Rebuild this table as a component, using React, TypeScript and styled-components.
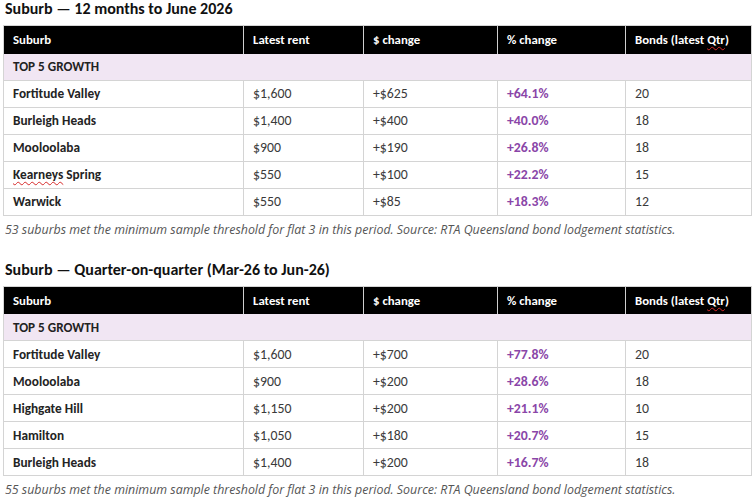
import React from "react";
import styled, { createGlobalStyle } from "styled-components";

const Global = createGlobalStyle`
  html, body { margin: 0; padding: 0; background: #fff; }
  body { font-family: Carlito, Calibri, Lato, "Liberation Sans", sans-serif; color: #333; }
`;

const Page = styled.div`
  padding: 0 5px 0 3px;
  width: 748px;
`;

const Section = styled.section`
  & + & { margin-top: 21px; }
`;

const Title = styled.h2`
  margin: 0 0 0 2px;
  font-size: 16px;
  line-height: 18px;
  font-weight: 700;
  color: #111;
`;

const Table = styled.table`
  margin-top: 7px;
  width: 748px;
  border-collapse: collapse;
  table-layout: fixed;
  font-size: 14px;
  border: 1px solid #d4d4d4;
`;

const HeadCell = styled.th<{ $w: number }>`
  width: ${(p) => p.$w}px;
  height: 28px;
  padding: 0 9px;
  box-sizing: border-box;
  background: #000;
  color: #fff;
  text-align: left;
  font-weight: 700;
  font-size: 12.8px;
  border-left: 1px solid #cfcfcf;
  &:first-child { border-left: none; }
`;

const GroupCell = styled.td`
  height: 26px;
  padding: 0 9px;
  background: #f1e6f3;
  font-weight: 700;
  font-size: 13.2px;
  color: #222;
  border-bottom: 1px solid #d4d4d4;
`;

const Cell = styled.td<{ $kind?: "name" | "pct" | "plain" }>`
  height: 27px;
  padding: 0 9px;
  box-sizing: border-box;
  border: 1px solid #d4d4d4;
  font-size: ${(p) => (p.$kind === "name" ? "13.3px" : "13.8px")};
  font-weight: ${(p) => (p.$kind === "name" || p.$kind === "pct" ? 700 : 400)};
  color: ${(p) => (p.$kind === "pct" ? "#8a46a8" : p.$kind === "name" ? "#242424" : "#3a3a3a")};
`;

const Squiggle = styled.span`
  text-decoration: underline wavy #d62a2a;
  text-decoration-thickness: 1px;
  text-underline-offset: 2px;
`;

const Caption = styled.p`
  margin: 4px 0 0 2px;
  font-family: "Open Sans", sans-serif;
  font-style: italic;
  font-size: 12.4px;
  line-height: 20px;
  color: #555;
`;

type Row = [string, string, string, string, string];

const widths = [240, 120, 134, 128, 126];

const Bonds = () => (
  <>
    Bonds (latest <Squiggle>Qtr</Squiggle>)
  </>
);

const renderName = (n: string) =>
  n === "Kearneys Spring" ? (
    <>
      <Squiggle>Kearneys</Squiggle> Spring
    </>
  ) : (
    n
  );

const GrowthTable = ({ title, rows, caption }: { title: string; rows: Row[]; caption: string }) => (
  <Section>
    <Title>{title}</Title>
    <Table>
      <thead>
        <tr>
          <HeadCell $w={widths[0]}>Suburb</HeadCell>
          <HeadCell $w={widths[1]}>Latest rent</HeadCell>
          <HeadCell $w={widths[2]}>$ change</HeadCell>
          <HeadCell $w={widths[3]}>% change</HeadCell>
          <HeadCell $w={widths[4]}>
            <Bonds />
          </HeadCell>
        </tr>
      </thead>
      <tbody>
        <tr>
          <GroupCell colSpan={5}>TOP 5 GROWTH</GroupCell>
        </tr>
        {rows.map((r) => (
          <tr key={r[0]}>
            <Cell $kind="name">{renderName(r[0])}</Cell>
            <Cell>{r[1]}</Cell>
            <Cell>{r[2]}</Cell>
            <Cell $kind="pct">{r[3]}</Cell>
            <Cell>{r[4]}</Cell>
          </tr>
        ))}
      </tbody>
    </Table>
    <Caption>{caption}</Caption>
  </Section>
);

const yearRows: Row[] = [
  ["Fortitude Valley", "$1,600", "+$625", "+64.1%", "20"],
  ["Burleigh Heads", "$1,400", "+$400", "+40.0%", "18"],
  ["Mooloolaba", "$900", "+$190", "+26.8%", "18"],
  ["Kearneys Spring", "$550", "+$100", "+22.2%", "15"],
  ["Warwick", "$550", "+$85", "+18.3%", "12"],
];

const qtrRows: Row[] = [
  ["Fortitude Valley", "$1,600", "+$700", "+77.8%", "20"],
  ["Mooloolaba", "$900", "+$200", "+28.6%", "18"],
  ["Highgate Hill", "$1,150", "+$200", "+21.1%", "10"],
  ["Hamilton", "$1,050", "+$180", "+20.7%", "15"],
  ["Burleigh Heads", "$1,400", "+$200", "+16.7%", "18"],
];

export default function App() {
  return (
    <>
      <Global />
      <Page>
        <GrowthTable
          title="Suburb — 12 months to June 2026"
          rows={yearRows}
          caption="53 suburbs met the minimum sample threshold for flat 3 in this period. Source: RTA Queensland bond lodgement statistics."
        />
        <GrowthTable
          title="Suburb — Quarter-on-quarter (Mar-26 to Jun-26)"
          rows={qtrRows}
          caption="55 suburbs met the minimum sample threshold for flat 3 in this period. Source: RTA Queensland bond lodgement statistics."
        />
      </Page>
    </>
  );
}
